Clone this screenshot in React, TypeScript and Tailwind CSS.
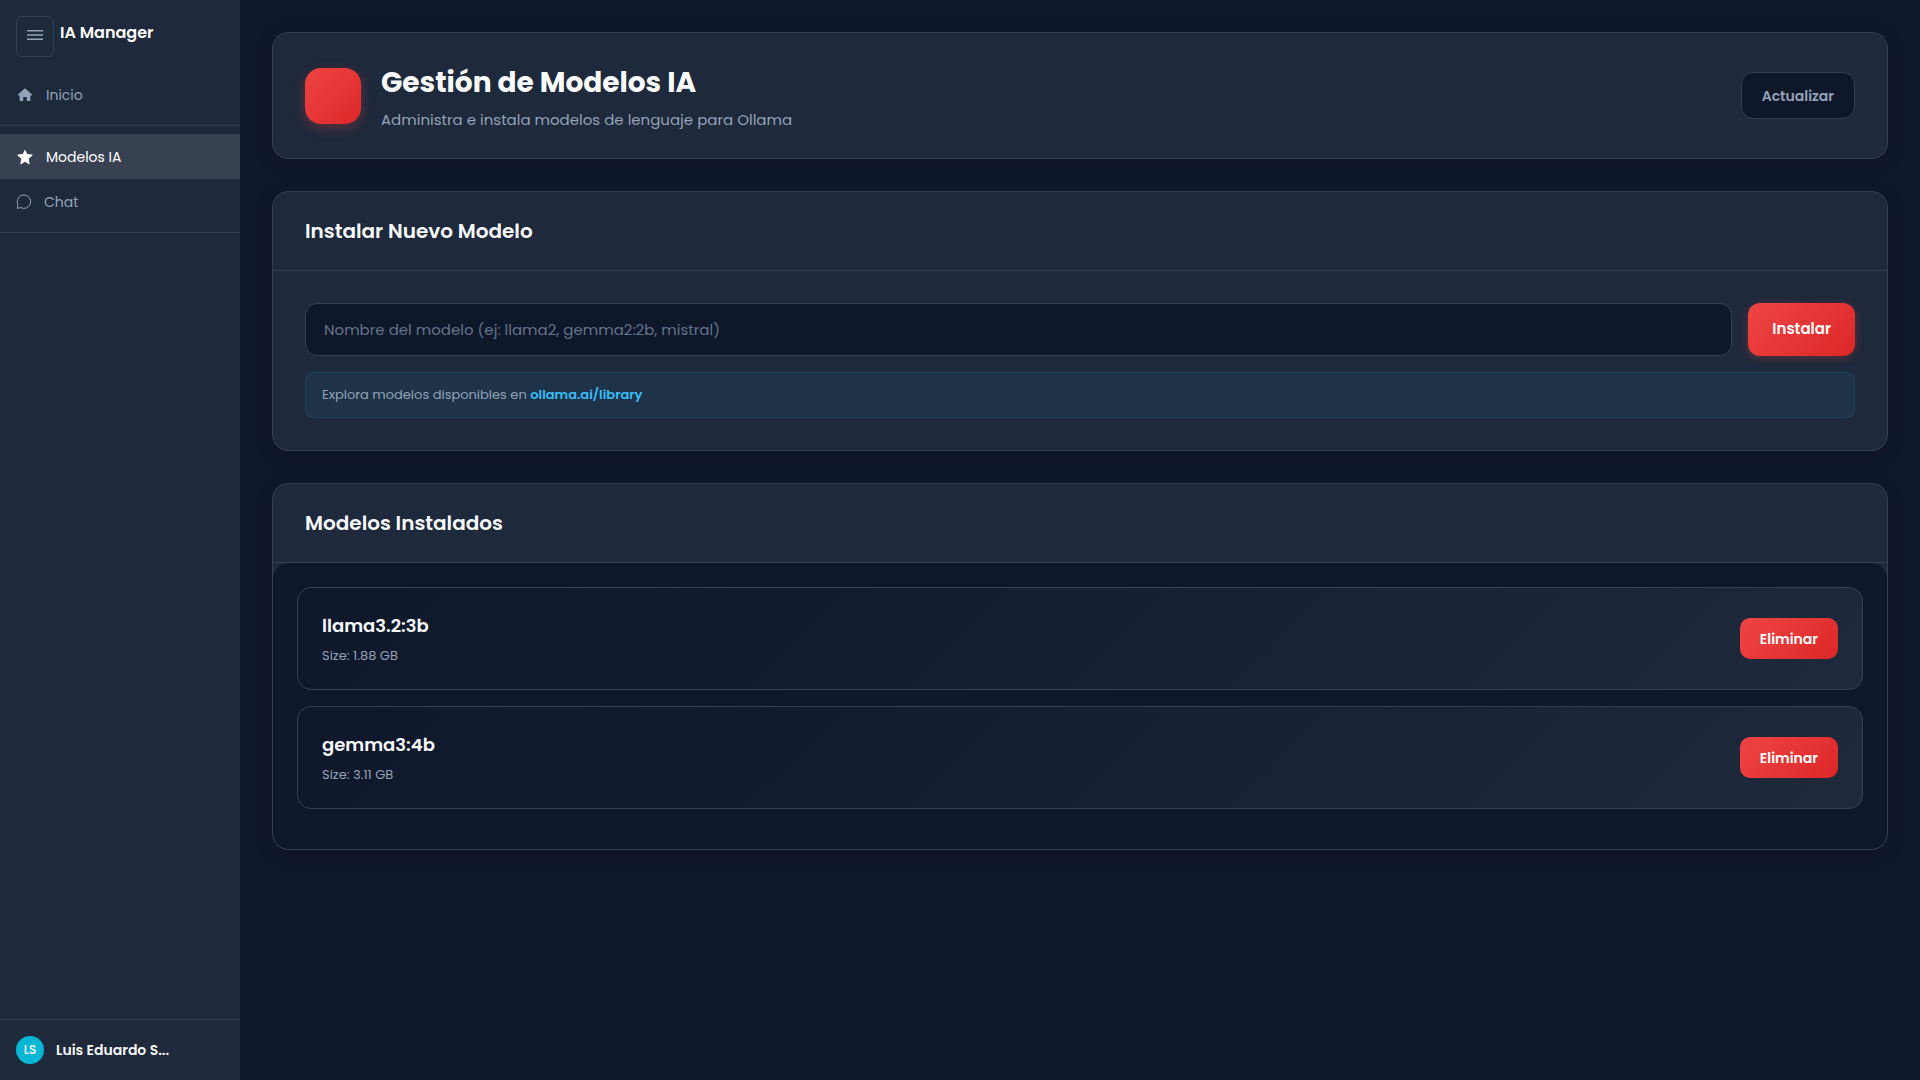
import { FormEvent, useState } from "react";

interface Model {
  name: string;
  size: string;
}

const initialModels: Model[] = [
  { name: "llama3.2:3b", size: "1.88 GB" },
  { name: "gemma3:4b", size: "3.11 GB" },
];

const HomeIcon = () => (
  <svg className="size-4" viewBox="0 0 16 16" fill="currentColor" aria-hidden="true">
    <path d="M8 1.300 15 7.600c.4.4.2.9-.3.9H13.400v5c0 .3-.2.5-.5.5H9.800v-3.600c0-.3-.2-.5-.5-.5H6.700c-.3 0-.5.2-.5.5V14H3.100c-.3 0-.5-.2-.5-.5v-5H1.300c-.5 0-.7-.5-.3-.9Z" />
  </svg>
);

const StarIcon = () => (
  <svg className="size-4" viewBox="0 0 16 16" fill="currentColor" aria-hidden="true">
    <path d="M8 .4l2.200 4.700 4.900.5c.4 0 .6.500.3.800l-3.700 3.400 1 4.900c.1.4-.3.7-.7.5L8 12.700l-4 2.500c-.4.2-.8-.1-.7-.5l1-4.900L.6 6.400c-.3-.3-.1-.8.3-.8l4.900-.5Z" />
  </svg>
);

const ChatIcon = () => (
  <svg className="size-4" viewBox="0 0 16 16" fill="none" stroke="currentColor" strokeWidth="1" aria-hidden="true">
    <path d="M8 1a6.700 6.700 0 1 1-3.200 12.600L1.300 14.300l.6-3.600A6.700 6.700 0 0 1 8 1Z" />
  </svg>
);

const MenuIcon = () => (
  <svg className="h-3 w-4" viewBox="0 0 16 12" stroke="currentColor" strokeWidth="1.500" aria-hidden="true">
    <path d="M0 1.800h16M0 6h16M0 10.200h16" />
  </svg>
);

const Sidebar = () => {
  const linkClass = "flex h-[45px] items-center gap-3 px-4 text-sm leading-6";
  return (
    <aside className="flex w-60 shrink-0 flex-col bg-[#1e293b]">
      <div className="flex h-[72px] items-start gap-1.5 px-4 pt-4">
        <button
          type="button"
          aria-label="Menu"
          className="flex h-[41px] w-[38px] items-center justify-center rounded-md border border-[#334155] pb-1 text-[#94a3b8]"
        >
          <MenuIcon />
        </button>
        <span className="text-base leading-[34px] font-semibold text-white">IA Manager</span>
      </div>
      <nav>
        <a href="#inicio" className={`${linkClass} text-[#94a3b8]`}>
          <span className="flex w-[18px] justify-center"><HomeIcon /></span>
          Inicio
        </a>
        <div className="my-2 border-t border-[#334155] pt-2">
          <a href="#modelos" className={`${linkClass} bg-[#374151] text-white`}>
            <span className="flex w-[18px] justify-center"><StarIcon /></span>
            Modelos IA
          </a>
          <a href="#chat" className={`${linkClass} text-[#94a3b8]`}>
            <ChatIcon />
            Chat
          </a>
        </div>
        <hr className="border-[#334155]" />
      </nav>
      <div className="mt-auto flex h-[61px] items-center gap-3 border-t border-[#334155] px-4">
        <span className="flex size-7 items-center justify-center rounded-full bg-[#06b6d4] text-xs font-medium text-white">
          LS
        </span>
        <span className="text-sm font-semibold text-[#f8fafc]">Luis Eduardo S...</span>
      </div>
    </aside>
  );
};

const App = () => {
  const [models, setModels] = useState<Model[]>(initialModels);
  const [modelName, setModelName] = useState("");

  const cardClass = "rounded-2xl border border-[#334155] bg-[#1e293b] shadow-[0_4px_20px_rgba(0,0,0,0.1)]";
  const redClass = "bg-linear-135 from-[#ef4444] to-[#dc2626] text-white";

  const installHandler = (e: FormEvent) => {
    e.preventDefault();
    const name = modelName.trim();
    if (!name) return;
    setModels([...models, { name, size: "0 GB" }]);
    setModelName("");
  };

  const deleteHandler = (name: string) => {
    setModels(models.filter((model) => model.name !== name));
  };

  return (
    <div className="flex min-h-screen bg-[#0f172a] font-['Poppins','Inter',sans-serif]">
      <Sidebar />
      <main className="flex min-w-0 flex-1 flex-col gap-8 p-8">
        <header className={`${cardClass} flex items-center gap-5 px-8 py-7`}>
          <div className={`${redClass} size-14 shrink-0 rounded-2xl shadow-[0_4px_12px_rgba(239,68,68,0.3)]`} />
          <div className="flex-1">
            <h1 className="text-[28px] leading-11 font-bold text-[#f8fafc]">Gestión de Modelos IA</h1>
            <p className="mt-1 text-[15px] leading-[21px] text-[#94a3b8]">
              Administra e instala modelos de lenguaje para Ollama
            </p>
          </div>
          <button
            type="button"
            className="h-[47px] rounded-xl border border-[#334155] bg-[#0f172a] px-5 text-sm font-semibold text-[#94a3b8]"
          >
            Actualizar
          </button>
        </header>

        <section className={cardClass}>
          <div className="flex h-[79px] items-center border-b border-[#334155] px-8">
            <h2 className="text-xl font-semibold text-[#f8fafc]">Instalar Nuevo Modelo</h2>
          </div>
          <form onSubmit={installHandler} className="p-8">
            <div className="flex gap-4">
              <input
                type="text"
                aria-label="Nombre del modelo"
                value={modelName}
                onChange={(e) => setModelName(e.target.value)}
                placeholder="Nombre del modelo (ej: llama2, gemma2:2b, mistral)"
                className="h-[53px] min-w-0 flex-1 rounded-xl border border-[#334155] bg-[#0f172a] px-[18px] text-[15px] text-[#f8fafc] placeholder:text-[#64748b]"
              />
              <button
                type="submit"
                className={`${redClass} h-[53px] rounded-xl px-6 text-[15px] font-semibold shadow-[0_2px_8px_rgba(239,68,68,0.3)]`}
              >
                Instalar
              </button>
            </div>
            <p className="mt-4 rounded-lg border border-[#0ea5e9]/15 bg-[#22b8e6]/8 px-4 py-3 text-[13px] leading-5 text-[#94a3b8]">
              Explora modelos disponibles en{" "}
              <a href="https://ollama.ai/library" className="font-semibold text-[#38bdf8]">ollama.ai/library</a>
            </p>
          </form>
        </section>

        <section className={cardClass}>
          <div className="flex h-[79px] items-center border-b border-[#334155] px-8">
            <h2 className="text-xl font-semibold text-[#f8fafc]">Modelos Instalados</h2>
          </div>
          <ul className="flex flex-col gap-4 rounded-2xl bg-[#0f172a] px-6 pt-6 pb-10">
            {models.map((model) => (
              <li
                key={model.name}
                className="flex h-[103px] items-center justify-between rounded-[14px] border border-[#334155] bg-linear-135 from-[#0f172a] to-[#1e293b] px-6"
              >
                <div>
                  <h3 className="text-lg leading-7 font-semibold text-[#f8fafc]">{model.name}</h3>
                  <p className="mt-1.5 text-[13px] leading-5 text-[#94a3b8]">Size: {model.size}</p>
                </div>
                <button
                  type="button"
                  onClick={() => deleteHandler(model.name)}
                  className={`${redClass} h-[41px] rounded-[10px] px-5 text-sm font-semibold`}
                >
                  Eliminar
                </button>
              </li>
            ))}
          </ul>
        </section>
      </main>
    </div>
  );
};

export default App;
